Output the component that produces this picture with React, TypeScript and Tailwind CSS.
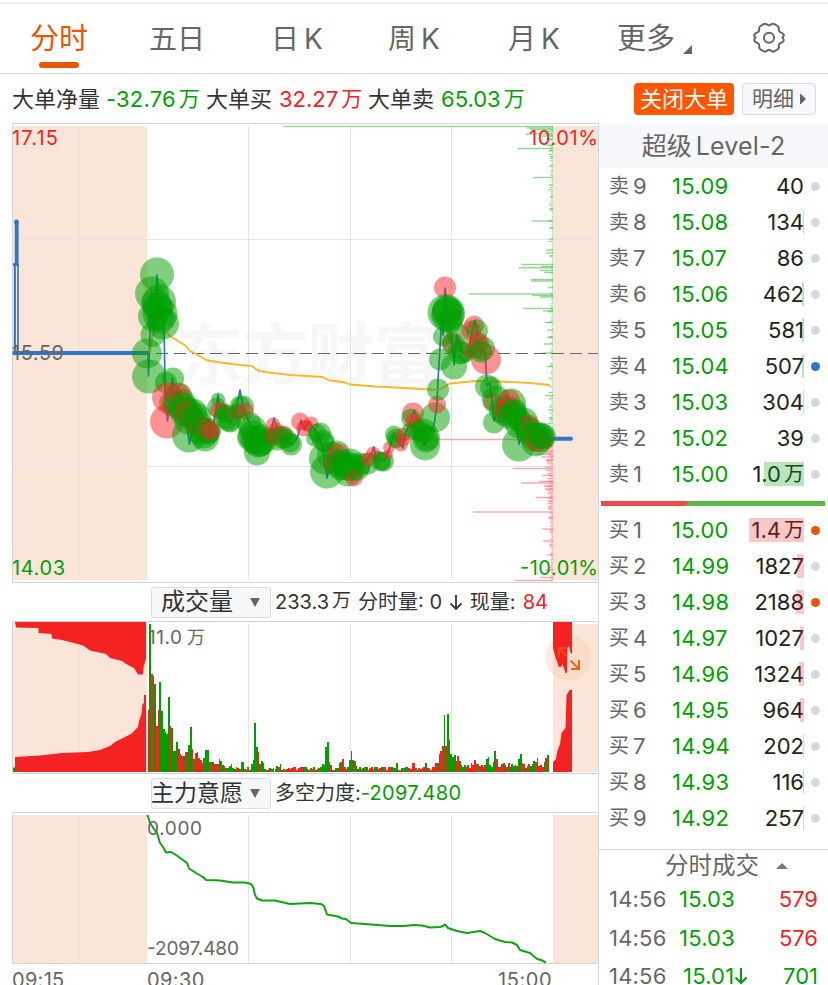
import React from "react";

const GREEN = "#009f00";
const RED = "#f42222";
const PEACH = "#fbe5d8";
const GRID = "#e2e4ec";
const FRAME = "#d3d5da";

type Bubble = [number, number, number];

const bubbles: { c: "g" | "r"; items: Bubble[] }[] = [
  { c: "g", items: [[157, 274, 17], [152, 293, 17], [159, 301, 17], [156, 303, 15], [160, 313, 17.5], [153, 316, 15], [163, 323, 16], [161, 319, 14], [158, 307, 15], [153, 334, 12.5], [147, 353, 15], [149, 376, 17], [166, 382, 11], [173, 378, 11]] },
  { c: "r", items: [[167, 397, 15], [167, 421, 17], [172, 403, 13], [173, 394, 10]] },
  { c: "g", items: [[179, 395, 13], [182, 401, 13], [174, 403, 12]] },
  { c: "r", items: [[179, 394, 11]] },
  { c: "g", items: [[183, 407, 15], [185, 411, 15], [188, 411, 14], [193, 412, 14], [188, 420, 14], [196, 419, 13], [189, 435, 17], [201, 430, 14]] },
  { c: "r", items: [[186, 412, 11], [193, 421, 10], [198, 426, 11], [205, 429, 11]] },
  { c: "g", items: [[198, 416, 13], [189, 415, 12], [194, 421, 12], [205, 437, 14], [204, 434, 14], [208, 430, 13]] },
  { c: "r", items: [[207, 429, 11]] },
  { c: "g", items: [[208, 432, 12]] },
  { c: "r", items: [[211, 430, 9]] },
  { c: "g", items: [[218, 399, 7], [217, 407, 10]] },
  { c: "r", items: [[219, 410, 9], [223, 411, 8]] },
  { c: "g", items: [[227, 417, 12], [229, 419, 12], [230, 421, 11], [225, 413, 10]] },
  { c: "r", items: [[236, 411, 8]] },
  { c: "g", items: [[240, 405, 10], [243, 406, 11], [238, 411, 8]] },
  { c: "r", items: [[245, 411, 9]] },
  { c: "g", items: [[249, 423, 12], [253, 429, 14], [250, 437, 13], [253, 435, 15], [255, 440, 14], [257, 452, 13], [258, 443, 14], [260, 440, 16], [261, 442, 13], [267, 437, 10]] },
  { c: "r", items: [[273, 424, 7], [276, 430, 8], [272, 436, 8]] },
  { c: "g", items: [[277, 438, 12]] },
  { c: "r", items: [[279, 435, 10], [284, 434, 9]] },
  { c: "g", items: [[282, 437, 11], [286, 438, 10], [291, 444, 11], [290, 442, 10]] },
  { c: "r", items: [[300, 421, 9], [304, 428, 8], [307, 425, 6], [311, 424, 8]] },
  { c: "g", items: [[317, 432, 9], [320, 433, 11], [314, 438, 8], [323, 440, 11], [325, 442, 10], [325, 458, 16], [327, 471, 17], [331, 455, 14], [337, 453, 13]] },
  { c: "r", items: [[338, 454, 11], [334, 464, 10]] },
  { c: "g", items: [[340, 463, 14], [341, 466, 14], [346, 464, 14], [350, 462, 14], [351, 467, 14], [348, 472, 14], [347, 467, 13], [359, 464, 12]] },
  { c: "r", items: [[354, 477, 9]] },
  { c: "g", items: [[357, 467, 13], [368, 463, 11]] },
  { c: "r", items: [[373, 453, 7], [368, 459, 7], [377, 456, 6]] },
  { c: "g", items: [[381, 461, 10], [384, 461, 10], [382, 461, 9]] },
  { c: "r", items: [[389, 447, 6], [388, 454, 5]] },
  { c: "g", items: [[394, 434, 9], [396, 438, 10], [396, 439, 8]] },
  { c: "r", items: [[403, 434, 7], [401, 444, 7], [405, 439, 6], [413, 413, 11]] },
  { c: "g", items: [[411, 418, 10], [410, 430, 8]] },
  { c: "r", items: [[413, 420, 8], [416, 424, 8]] },
  { c: "g", items: [[417, 430, 10], [420, 431, 11], [424, 430, 12], [427, 437, 13], [425, 445, 15], [426, 439, 13], [435, 417, 15]] },
  { c: "r", items: [[437, 404, 9]] },
  { c: "g", items: [[438, 389, 11], [440, 359, 11], [443, 336, 10]] },
  { c: "r", items: [[445, 287, 11]] },
  { c: "g", items: [[446, 312, 18.5], [447, 310, 15], [448, 314, 17], [447, 312, 15], [450, 320, 13]] },
  { c: "r", items: [[453, 343, 11]] },
  { c: "g", items: [[452, 343, 10], [458, 334, 11], [454, 366, 13], [460, 352, 12], [462, 352, 11], [466, 353, 9]] },
  { c: "r", items: [[474, 325, 10], [471, 330, 10], [479, 342, 10], [474, 346, 9], [469, 353, 5]] },
  { c: "g", items: [[477, 330, 11], [476, 349, 9], [483, 348, 12]] },
  { c: "r", items: [[478, 341, 9], [486, 359, 15]] },
  { c: "g", items: [[481, 351, 11], [487, 386, 12], [491, 387, 11], [494, 422, 11]] },
  { c: "r", items: [[492, 401, 9]] },
  { c: "g", items: [[496, 399, 14], [503, 409, 14], [511, 403, 15], [506, 412, 14]] },
  { c: "r", items: [[509, 400, 11], [504, 410, 10], [510, 406, 10]] },
  { c: "g", items: [[514, 411, 13], [511, 415, 14], [514, 413, 13], [519, 424, 14], [519, 419, 12], [524, 421, 14], [519, 444, 17], [529, 430, 14]] },
  { c: "r", items: [[529, 424, 10]] },
  { c: "g", items: [[528, 429, 12], [535, 437, 14], [540, 438, 14], [536, 441, 15]] },
  { c: "r", items: [[537, 439, 12], [545, 440, 8]] },
  { c: "g", items: [[541, 435, 13], [543, 436, 13], [538, 434, 12]] },
];

const priceLine =
  "148,353 148.5,376 150,330 152,293 154,335 157,275 159,303 164,322 165,385 167.5,421 172.5,378 176,405 180,393 185,415 189.5,444 193,425 205,436 213,428 218,395 220,412 230,423 236,410 240,390 243,406 250,425 257,452 262,438 270,437 274,418 278,432 292,445 298,436 301,420 304,430 309,422 316,431 322,445 327,478 332,455 341,462 352,480 361,466 366,462 372,452 374,447 376,458 384,461 389,450 394,434 398,442 403,448 406,432 411,420 414,410 419,425 424,446 434,425 437,404 438,380 442,315 443,335 445,288 448,315 453,350 454,365 457,335 462,352 468,352 472,332 475,320 478,338 481,348 485,352 487,386 490,382 494,421 500,405 507,396 514,410 519,444 525,424 535,437 545,440 552,438";

const averageLine =
  "150,353 152,337 156,325 163,329 170,336 178,341 186,346 190,351 198,355 206,360 220,362.5 240,365 252,366 258,370.5 265,372 290,375 323,377 328,380 345,382.5 350,384.5 375,386.5 405,388 438,390 444,387 450,383.5 475,381 500,381.5 530,383 550,385";

const sellDepth: [number, number][] = [
  [126.5, 283], [128, 527], [129.5, 530], [131.5, 541], [134, 526], [136, 540], [139, 546], [145, 546], [148.5, 518], [151, 549], [157, 551], [166, 549], [170.5, 551], [177.5, 533], [185, 549], [197, 550], [209, 549], [221, 532], [228, 549], [239, 549], [250, 546], [253, 546], [256, 549], [264.5, 521], [266.5, 541], [267.8, 519], [270.5, 540], [272.5, 544], [279.5, 531], [281, 531], [287.5, 548], [294, 469], [295.5, 532], [297, 540], [308.5, 523], [311, 543], [322.5, 545], [330, 547], [337.5, 547], [344, 544], [353, 543], [366.5, 547], [395.5, 545], [410, 548], [418, 549],
];

const buyDepth: [number, number][] = [
  [439.5, 394], [442, 530], [446, 532], [451, 538], [454, 535], [457, 541], [460, 546], [468.5, 512.5], [475.5, 542], [481.5, 539], [483, 521], [486, 544], [489, 545], [497.5, 536], [501, 548], [512, 473], [518, 548], [529, 542], [541, 543], [555, 547], [570, 545], [577.5, 540], [580.5, 515],
];

const noise = (i: number) => {
  const v = Math.sin(i * 12.9898) * 43758.5453;
  return v - Math.floor(v);
};

const volumeKeys: Record<number, [number, "g" | "r"]> = {
  0: [62, "r"], 1: [148, "g"], 2: [98, "r"], 3: [96, "r"], 4: [88, "g"], 5: [46, "r"], 6: [62, "r"], 7: [90, "g"], 8: [61, "g"], 9: [43, "g"], 10: [40, "g"], 11: [38, "g"], 12: [75, "g"], 13: [46, "r"], 14: [44, "g"], 15: [21, "g"], 16: [21, "r"], 17: [30, "g"], 18: [23, "r"], 19: [18, "r"], 20: [16, "r"], 21: [16, "g"], 22: [20, "r"], 23: [20, "g"], 24: [27, "g"], 25: [45, "g"], 26: [23, "r"], 27: [13, "g"], 28: [19, "r"], 29: [20, "g"], 30: [14, "r"], 31: [12, "r"], 32: [9, "r"], 33: [14, "g"], 34: [22, "g"], 35: [22, "g"], 36: [10, "g"], 37: [10, "r"], 38: [10, "g"], 39: [8, "r"], 40: [8, "r"], 41: [8, "r"], 42: [13, "r"], 43: [11, "g"], 44: [7, "g"], 45: [6, "r"], 46: [4, "g"], 47: [4, "g"], 48: [6, "g"], 49: [8, "r"], 55: [10, "r"], 56: [10, "g"], 61: [8, "g"], 62: [12, "g"], 63: [49, "g"], 64: [25, "g"], 65: [20, "r"], 66: [8, "g"], 67: [11, "g"], 68: [9, "g"], 76: [6, "g"], 78: [8, "g"],
  103: [8, "g"], 104: [7, "g"], 105: [25, "g"], 106: [30, "g"], 107: [10, "r"], 108: [7, "r"], 113: [9, "g"], 114: [10, "g"], 115: [13, "r"], 119: [12, "g"], 120: [21, "g"], 121: [12, "g"], 122: [11, "r"], 123: [6, "g"], 147: [9, "g"], 156: [9, "r"], 157: [9, "r"], 164: [9, "g"], 170: [9, "r"], 171: [9, "g"], 172: [18, "r"], 173: [21, "r"], 174: [26, "r"], 175: [57, "g"], 176: [26, "r"], 177: [58, "g"], 178: [32, "g"], 179: [18, "g"], 180: [15, "g"], 181: [17, "g"], 182: [11, "r"], 183: [16, "r"], 184: [11, "g"], 185: [7, "r"], 193: [12, "r"], 195: [8, "g"], 200: [13, "g"], 201: [15, "g"], 204: [10, "g"], 205: [21, "g"], 206: [13, "r"], 210: [9, "g"], 219: [13, "g"], 220: [18, "g"], 221: [9, "r"], 222: [8, "r"], 228: [11, "g"], 229: [10, "r"], 230: [14, "g"], 234: [10, "g"], 235: [14, "r"], 236: [17, "g"],
};

const volumeBars = Array.from({ length: 237 }, (_, i) => {
  const k = volumeKeys[i];
  const base = i > 182 ? 4 : 2;
  const h = k ? k[0] : base + noise(i + 3) * (i > 182 ? 5 : 3.5);
  const up = k ? k[1] === "r" : noise(Math.floor(i / 2) + 51) > 0.46;
  return { x: 147.6 + i * 1.692, h, up };
});

const latin = { fontFamily: 'Inter, "Noto Sans CJK SC", sans-serif' };

function VerticalGrid({ top, bottom }: { top: number; bottom: number }) {
  return (
    <g stroke={GRID} strokeWidth={1}>
      {[79.5, 248.5, 350.5, 451.5].map((x) => (
        <line key={x} x1={x} x2={x} y1={top} y2={bottom} />
      ))}
    </g>
  );
}

function PriceChart() {
  return (
    <svg width={598} height={460} viewBox="0 123 598 460" className="block" style={latin}>
      <rect x={13} y={126} width={134} height={454} fill={PEACH} />
      <rect x={553} y={126} width={45} height={454} fill={PEACH} />
      <text x={176} y={379} fontSize={67} fontWeight={700} fill="#f7f7f7" textLength={264}>东方财富</text>
      <VerticalGrid top={126} bottom={580} />
      <g stroke={GRID}>
        <line x1={13} x2={598} y1={239.5} y2={239.5} />
        <line x1={13} x2={598} y1={466.5} y2={466.5} />
      </g>
      <path d="M598 123.5H12.5V582.5H598" fill="none" stroke={FRAME} />
      <line x1={156} x2={598} y1={353.5} y2={353.5} stroke="#666" strokeWidth={1} strokeDasharray="12 6" />
      <g fill="#0ca50c" fillOpacity={0.45}>
        {sellDepth.map(([y, x]) => <rect key={y} x={x} y={y - 0.7} width={553 - x} height={1.4} />)}
        {Array.from({ length: 150 }, (_, i) => {
          const w = 0.8 + noise(i) * noise(i + 7) * 5;
          return <rect key={i} x={553 - w} y={127 + i * 2.07} width={w} height={1.2} />;
        })}
      </g>
      <g fill="#fb5a60" fillOpacity={0.55}>
        {buyDepth.map(([y, x]) => <rect key={y} x={x} y={y - 0.7} width={553 - x} height={1.4} />)}
        {Array.from({ length: 85 }, (_, i) => {
          const w = 0.8 + noise(i + 200) * (i < 45 ? 7 : 3);
          return <rect key={i} x={553 - w} y={440 + i * 1.65} width={w} height={1.2} />;
        })}
      </g>
      <g fill="none" stroke="#3076c6">
        <path d="M16.7 222V266" strokeWidth={3.8} />
        <path d="M14.9 264V353" strokeWidth={2} />
        <path d="M18 264V353" strokeWidth={1.6} />
        <path d="M13 353H149" strokeWidth={4} />
        <path d="M550 438.8H571" strokeWidth={4} strokeLinecap="round" />
        <polyline points={priceLine} strokeWidth={1.7} strokeLinejoin="round" />
      </g>
      <circle cx={16.5} cy={222} r={2.4} fill="#3076c6" />
      <circle cx={14.6} cy={264.5} r={1.8} fill="#3076c6" />
      <circle cx={14.6} cy={353} r={2.3} fill="#3076c6" />
      <polyline points={averageLine} fill="none" stroke="#ffb629" strokeWidth={1.8} strokeLinejoin="round" />
      {bubbles.map((group, gi) => (
        <g key={gi} fill={group.c === "g" ? "#00a000" : "#f82828"} fillOpacity={0.5}>
          {group.items.map(([x, y, r], i) => <circle key={i} cx={x} cy={y + 0.5} r={r} />)}
        </g>
      ))}
      <g fontSize={20}>
        <text x={12} y={144.5} fill={RED} textLength={46}>17.15</text>
        <text x={12} y={359.5} fill="#666" textLength={52}>15.59</text>
        <text x={12} y={575} fill={GREEN} textLength={53}>14.03</text>
        <text x={529} y={144.5} fill={RED} textLength={69}>10.01%</text>
        <text x={520} y={575} fill={GREEN} textLength={78}>-10.01%</text>
      </g>
    </svg>
  );
}

function VolumeChart() {
  return (
    <svg width={598} height={153} viewBox="0 621 598 153" className="block" style={latin}>
      <rect x={13} y={622} width={134} height={150} fill={PEACH} />
      <rect x={553} y={624} width={45} height={148} fill={PEACH} />
      <VerticalGrid top={624} bottom={772} />
      <path d="M598 621.5H12.5V773.5H598" fill="none" stroke={FRAME} />
      <circle cx={568.5} cy={658} r={23} fill="#f9cdb6" fillOpacity={0.4} />
      <g fill={RED}>
        <path d="M15 622 16 627.5 38.5 628V633L51.5 634 52 638.5 62 640 72 642.5 83 645.5 90 650.5 106 654 110 658 122 661 126 664 134 668 138 674.5H143L143.5 667 146 659V622Z" />
        <path d="M15 772V757L40 755.5 62 753 88 752 100 750 110 746 115 742 125 737 131 734 138 727 139 721 141.5 714 142.5 704 144 703V695H146V772Z" />
        <path d="M553 622H572V654L570 652 569 646 567.5 648 567 673H565.5L562.5 664 561 667H559L555 656 553 648Z" />
        <path d="M553 772V762L556 759 557 752 560 744 561.5 733 565.5 728 566.5 695 569.5 690H572V772Z" />
      </g>
      <path d="M13 772V768L15 767V772Z" fill={GREEN} />
      {volumeBars.map((b, i) => (
        <rect key={i} x={b.x} y={772 - b.h} width={1.69} height={b.h} fill={b.up ? RED : GREEN} shapeRendering="crispEdges" />
      ))}
      <text x={148} y={644} fontSize={19} fill="#666" textLength={34}>11.0</text>
      <text x={187} y={644} fontSize={18} fill="#666">万</text>
      <g fill="none" stroke="#f06213" strokeWidth={2}>
        <path d="M559 657V648H567M559.5 648.5 566.5 656" opacity={0.65} />
        <path d="M579 660V669H571M570.5 660.5 578.5 668.5" />
      </g>
    </svg>
  );
}

function ForceChart() {
  return (
    <svg width={598} height={152} viewBox="0 812 598 152" className="block" style={latin}>
      <rect x={13} y={815} width={134} height={148} fill={PEACH} />
      <rect x={553} y={815} width={45} height={148} fill={PEACH} />
      <VerticalGrid top={815} bottom={963} />
      <path d="M598 812.5H12.5V963.5H598" fill="none" stroke={FRAME} />
      <polyline
        fill="none" stroke="#0fa30f" strokeWidth={2} strokeLinejoin="round"
        points="147.5,815 150,823 154,829 157,833 160,843 163,847 166,852.5 171,852 176,855 183,860 187,863 189,868.5 196,873 203,877 206,880 220,880.5 233,882.5 245,882.5 251,884 253.5,888 255,895 257,898.5 262,900.5 275,900.5 290,904 310,903 321,904 324,906 327,914.5 338,916.5 342,918.5 346,919 351,923 365,924 390,926 403,926 415,925 422,925.5 430,927.5 440,927 443,926 445,924.5 448,928 457,931 467,933 480,931 485,933 495,939 505,942 512,942.5 517,945 520,950 530,953 537,959 541,960 546,962.5"
      />
      <g fontSize={19} fill="#666">
        <text x={147} y={835} textLength={55}>0.000</text>
        <text x={147} y={955} textLength={92}>-2097.480</text>
      </g>
    </svg>
  );
}

type Row = { label: string; n: number; price: string; qty: string; unit?: string; bar: number; dot: string };
const grey = "bg-[#d5d8df]";
const sells: Row[] = [
  { label: "卖", n: 9, price: "15.09", qty: "40", bar: 0, dot: grey },
  { label: "卖", n: 8, price: "15.08", qty: "134", bar: 1, dot: grey },
  { label: "卖", n: 7, price: "15.07", qty: "86", bar: 0, dot: grey },
  { label: "卖", n: 6, price: "15.06", qty: "462", bar: 2, dot: grey },
  { label: "卖", n: 5, price: "15.05", qty: "581", bar: 2, dot: grey },
  { label: "卖", n: 4, price: "15.04", qty: "507", bar: 2, dot: "bg-[#2f74c6]" },
  { label: "卖", n: 3, price: "15.03", qty: "304", bar: 1, dot: grey },
  { label: "卖", n: 2, price: "15.02", qty: "39", bar: 0, dot: grey },
  { label: "卖", n: 1, price: "15.00", qty: "1.0", unit: "万", bar: 40, dot: grey },
];
const buys: Row[] = [
  { label: "买", n: 1, price: "15.00", qty: "1.4", unit: "万", bar: 55, dot: "bg-[#eb5505]" },
  { label: "买", n: 2, price: "14.99", qty: "1827", bar: 7, dot: grey },
  { label: "买", n: 3, price: "14.98", qty: "2188", bar: 8, dot: "bg-[#eb5505]" },
  { label: "买", n: 4, price: "14.97", qty: "1027", bar: 4, dot: grey },
  { label: "买", n: 5, price: "14.96", qty: "1324", bar: 5, dot: grey },
  { label: "买", n: 6, price: "14.95", qty: "964", bar: 4, dot: grey },
  { label: "买", n: 7, price: "14.94", qty: "202", bar: 1, dot: grey },
  { label: "买", n: 8, price: "14.93", qty: "116", bar: 1, dot: grey },
  { label: "买", n: 9, price: "14.92", qty: "257", bar: 1, dot: grey },
];

function BookRow({ row, sell }: { row: Row; sell: boolean }) {
  return (
    <div className="flex h-9 items-center pl-[10px] text-[22px] leading-9">
      <span className="w-6 text-[20px] text-[#666]">{row.label}</span>
      <span className="w-[39px] text-[#666]">{row.n}</span>
      <span className="w-[58px] tracking-[0.3px] text-[#009f00]">{row.price}</span>
      <span className="relative flex h-6 w-[74px] items-center justify-end text-[#222]">
        {row.qty}
        {row.unit && <span className="ml-[3px] text-[20px]">{row.unit}</span>}
        <i className={`absolute right-0 top-0 h-6 ${sell ? "bg-[#0aa50a]/28" : "bg-[#f52727]/26"}`} style={{ width: row.bar }} />
      </span>
      <i className={`ml-[7px] size-[9px] rounded-full ${row.dot}`} />
    </div>
  );
}

function Trade({ price, qty, down }: { price: string; qty: string; down?: boolean }) {
  return (
    <div className="flex h-[38.5px] items-center pl-[10px] pr-[10px] text-[22px] leading-[38px]">
      <span className="w-[70px] tracking-[0.2px] text-[#666]">14:56</span>
      <span className={`tracking-[0.2px] text-[#009f00] ${down ? "pl-1" : ""}`}>{price}</span>
      {down && (
        <svg width={14} height={18} viewBox="0 0 14 18" fill="none" stroke={GREEN} strokeWidth={2}><path d="M7 1V16M1.5 10.5 7 16 12.5 10.5" /></svg>
      )}
      <span className={`ml-auto ${down ? "text-[#009f00]" : "text-[#f42222]"}`}>{qty}</span>
    </div>
  );
}

function Selector({ text, wide }: { text: string; wide?: boolean }) {
  return (
    <div className={`flex h-[31px] w-[120px] items-center rounded-[3px] border border-[#d9dce2] bg-[#f7f8fa] text-[#333] ${wide ? "" : "pl-[9px]"}`}>
      <span className={wide ? "-ml-px w-[99px] whitespace-nowrap text-[23px]" : "w-[89px] text-[24px]"}>{text}</span>
      <svg width={10} height={9} viewBox="0 0 10 9"><path d="M0 0H10L5 9Z" fill="#666" /></svg>
    </div>
  );
}

export default function App() {
  return (
    <div className="h-[985px] w-[828px] overflow-hidden bg-white font-[Inter,'Noto_Sans_CJK_SC',sans-serif] text-[#333]">
      <nav className="flex h-[74px] border-b border-[#d3d5da] pt-[2px] text-[28px] text-[#666]">
        <div className="flex w-full border-t-2 border-[#eee] pl-[30px] pt-[14px] leading-[42px]">
          <div className="w-[119px] text-[29px] text-[#eb5505]">
            分时
            <div className="ml-[9px] mt-[2px] h-[6px] w-10 rounded-full bg-[#eb5505]" />
          </div>
          <span className="w-[122px]">五日</span>
          <span className="w-[117px]">日<span className="ml-[5px]">K</span></span>
          <span className="w-[120px]">周<span className="ml-[5px]">K</span></span>
          <span className="w-[109px]">月<span className="ml-[5px]">K</span></span>
          <span className="flex w-[135px] text-[29px]">
            更多
            <svg className="ml-2 mt-[27px]" width={9} height={9} viewBox="0 0 9 9"><path d="M9 0V9H0Z" fill="#666" /></svg>
          </span>
          <svg className="mt-[4px]" width={34} height={32} viewBox="0 0 34 32" fill="none" stroke="#666" strokeWidth={2}>
            <path d="M11.5 2.2Q13.5 1 15 2.5Q17 4.2 19 2.5Q20.5 1 22.5 2.2L25.5 4Q27.2 5 26.8 7.3Q26.5 9.8 29 10.6Q31.6 11.4 31.8 13.4Q31.8 14.2 30.5 15.7Q31.8 17.2 31.8 18Q31.6 20 29 20.8Q26.5 21.7 26.8 24Q27.2 26.5 25.5 27.5L22.5 29.2Q20.5 30.2 19 28.8Q17 27 15 28.8Q13.5 30.2 11.5 29.2L8.5 27.5Q6.8 26.5 7.2 24Q7.5 21.7 5 20.8Q2.4 20 2.2 18Q2.2 17.2 3.5 15.7Q2.2 14.2 2.2 13.4Q2.4 11.4 5 10.6Q7.5 9.8 7.2 7.3Q6.8 5 8.5 4Z" />
            <circle cx={17} cy={15.7} r={5} />
          </svg>
        </div>
      </nav>

      <div className="flex h-[49px] items-center pl-3 pr-3 text-[22px] leading-8">
        <span className="w-[94px]">大单净量</span>
        <span className="flex w-[100px] tracking-[0.2px] text-[#009f00]">-32.76<span className="ml-[3px] text-[21px]">万</span></span>
        <span className="w-[73px]">大单买</span>
        <span className="flex w-[89px] text-[#f42222]">32.27<span className="ml-[3px] text-[21px]">万</span></span>
        <span className="w-[73px]">大单卖</span>
        <span className="flex text-[#009f00]">65.03<span className="ml-[3px] text-[21px]">万</span></span>
        <span className="ml-auto mr-2 flex h-8 w-[100px] items-center justify-center rounded bg-[#ff5500] text-white">关闭大单</span>
        <span className="flex h-8 w-[74px] items-center gap-[6px] rounded border border-[#d7dae2] bg-[#f7f8fb] pl-[9px] text-[21px] text-[#666]">
          明细
          <svg width={6} height={10} viewBox="0 0 6 10"><path d="M0 0H1L6 5 1 10H0Z" fill="#666" /></svg>
        </span>
      </div>

      <main className="flex">
        <section className="w-[598px] shrink-0">
          <PriceChart />
          <div className="flex h-[38px] items-center pl-[151px] text-[20px]">
            <Selector text="成交量" />
            <span className="ml-[4px] flex whitespace-pre"><span>233.3</span><span className="ml-[3px] w-[26px] text-[19px] leading-7">万</span><span>分时量: 0 </span></span>
            <svg className="mx-px" width={14} height={17} viewBox="0 0 14 17" fill="none" stroke="#333" strokeWidth={1.8}><path d="M7 1V15M1.5 9.5 7 15 12.5 9.5" /></svg>
            <span className="ml-[6px] w-[53px] whitespace-nowrap">现量:</span>
            <span className="text-[#f42222]">84</span>
          </div>
          <VolumeChart />
          <div className="flex h-[38px] items-center pl-[151px] text-[20px]">
            <Selector text="主力意愿" wide />
            <span className="ml-1">多空力度:<span className="tracking-[0.3px] text-[#009f00]">-2097.480</span></span>
          </div>
          <ForceChart />
          <div className="flex h-[21px] pl-3 text-[20px] leading-8 text-[#666]">
            <span className="w-[135px] tracking-[0.3px]">09:15</span>
            <span className="w-[351px] tracking-[0.4px]">09:30</span>
            <span className="tracking-[0.6px]">15:00</span>
          </div>
        </section>

        <aside className="h-[862px] w-[230px] border-l border-[#d3d5da]">
          <h2 className="mt-px flex h-[44px] items-center justify-center bg-[#f7f8fb] pt-px text-[25px] text-[#666]">超级<span className="ml-[4px] tracking-[0.2px]">Level-2</span></h2>
          {sells.map((r) => <BookRow key={r.n} row={r} sell />)}
          <div className="flex h-[21px] items-center pl-[2px] pt-px">
            <svg width={224} height={5} viewBox="0 0 224 5"><rect width={224} height={5} fill="#5ab843" /><path d="M0 0H88L84 5H0Z" fill="#ec4a4a" /></svg>
          </div>
          <div className="-mt-px">
            {buys.map((r) => <BookRow key={r.n} row={r} sell={false} />)}
          </div>
          <div className="mt-[13px] flex h-[31px] items-center border-t border-[#d3d5da] pl-[66px] pt-0.5 text-[23.5px] text-[#666]">
            分时成交
            <svg className="ml-[17px]" width={12} height={6} viewBox="0 0 12 6"><path d="M0 6 6 0 12 6Z" fill="#777" /></svg>
          </div>
          <Trade price="15.03" qty="579" />
          <Trade price="15.03" qty="576" />
          <Trade price="15.01" qty="701" down />
        </aside>
      </main>
    </div>
  );
}
